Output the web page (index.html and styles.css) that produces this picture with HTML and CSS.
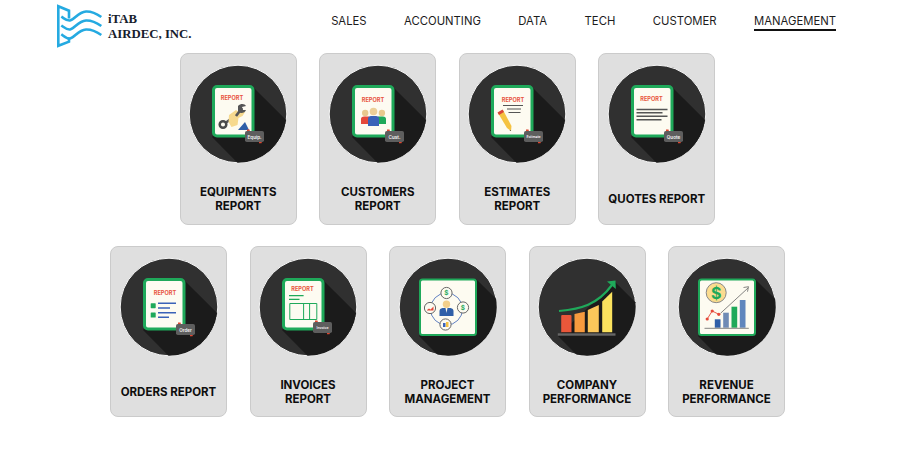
FILE: index.html
```html
<!DOCTYPE html>
<html lang="en">
<head>
<meta charset="utf-8">
<title>iTAB Airdec - Management</title>
<link rel="stylesheet" href="styles.css">
</head>
<body>
<svg class="defs" width="0" height="0" aria-hidden="true">
  <symbol id="disc" viewBox="0 0 100 100">
    <circle cx="50" cy="50" r="48.800" fill="#303030" stroke="#f7f7f7" stroke-width="1"/>
  </symbol>
  <symbol id="doc" viewBox="0 0 100 100">
    <path d="M66 24L98.100 56.100A48.800 48.800 0 0 1 49.500 98.800L24 73Z" fill="#1b1b1b"/>
    <rect x="25.500" y="22.500" width="39.500" height="49.500" rx="3.500" fill="#fdfbf1" stroke="#1fa95a" stroke-width="3"/>
  </symbol>
  <symbol id="square" viewBox="0 0 100 100">
    <path d="M78 22L98 41.800A48.800 48.800 0 0 1 39.300 97.600L21 79Z" fill="#1b1b1b"/>
    <rect x="22" y="22.500" width="56" height="55.500" rx="2.500" fill="#fdfbf1" stroke="#1fa95a" stroke-width="2"/>
  </symbol>
  <symbol id="tag" viewBox="0 0 100 100">
    <path d="M59 65.500h2.500l.5 2h-3zM71 77.500h3l-.5 1.800h-2.500z" fill="#e0452f"/>
    <rect x="57" y="67" width="19" height="11" rx="1.800" fill="#5e5e5e"/>
  </symbol>
</svg>

<header class="topbar">
  <a class="brand" href="#">
    <svg class="brand-mark" viewBox="0 0 46 44" fill="none" stroke="#25aae1" stroke-width="2.600">
      <path d="M12 14.500V6.700L1.300 2.200V41.800L12 37.700V33.500"/>
      <path d="M4.300 12.700C8 15 10 17 13 16.500C18 15.500 21 8 29 7.500C35 7.200 40 10 44.300 13"/>
      <path d="M4.300 21.500C8 24 10 26 13 25.500C18 24.500 21 17 29 16.500C35 16.200 40 19 44.300 22"/>
      <path d="M4.300 30.300C8 33 10 35 13 34.500C18 33.500 21 26 29 25.500C35 25.200 40 28 44.300 31"/>
    </svg>
    <span class="brand-name">iTAB<br>AIRDEC, INC.</span>
  </a>
  <nav class="menu">
    <a href="#">SALES</a>
    <a href="#">ACCOUNTING</a>
    <a href="#">DATA</a>
    <a href="#">TECH</a>
    <a href="#">CUSTOMER</a>
    <a class="active" href="#">MANAGEMENT</a>
  </nav>
</header>

<main class="board">
  <div class="row">
    <a class="card" href="#">
      <svg class="icon" viewBox="0 0 100 100">
        <use href="#disc"/><use href="#doc"/>
        <text class="rep" x="44" y="35.500">REPORT</text>
        <path d="M36 60L47 52" stroke="#555" stroke-width="2.500"/>
        <circle cx="35" cy="60.500" r="3.300" fill="#fdfbf1" stroke="#4a4a4a" stroke-width="2.500"/>
        <path d="M41 51l7-5 4 3 3-3 2 2-2.500 4-4 2-1 7-6 2-3-5z" fill="#f6d98e"/>
        <path d="M48 52L54 44" stroke="#555" stroke-width="2.600"/>
        <path d="M50 42c3-3 7-2 8 0l-4 1 1 3 3 0c-1 3-5 4-8 2z" fill="#555"/>
        <path d="M50 66l7-8 4 8z" fill="#2f5fa8"/>
        <use href="#tag"/>
        <text class="tagtxt" x="66.500" y="74.500">Equip.</text>
      </svg>
      <span class="label">EQUIPMENTS REPORT</span>
    </a>
    <a class="card" href="#">
      <svg class="icon" viewBox="0 0 100 100">
        <use href="#disc"/><use href="#doc"/>
        <text class="rep" x="45" y="38">REPORT</text>
        <circle cx="37.200" cy="49" r="3.200" fill="#e8c98e"/>
        <circle cx="53.900" cy="49" r="3.200" fill="#e8c98e"/>
        <path d="M33 60v-5q0-2.500 3-2.500h5v7.500z" fill="#e5483a"/>
        <path d="M58 60v-5q0-2.500-3-2.500h-5v7.500z" fill="#1fa95a"/>
        <circle cx="45.500" cy="47.500" r="3.800" fill="#eccf98"/>
        <path d="M40 62v-7q0-3 3-3h5q3 0 3 3v7z" fill="#3a62b8"/>
        <use href="#tag"/>
        <text class="tagtxt" x="66.500" y="74.500">Cust.</text>
      </svg>
      <span class="label">CUSTOMERS REPORT</span>
    </a>
    <a class="card" href="#">
      <svg class="icon" viewBox="0 0 100 100">
        <use href="#disc"/><use href="#doc"/>
        <text class="rep" x="46" y="38">REPORT</text>
        <path d="M36 41.500h20M40 45h14M41.500 48.500h12" stroke="#555" stroke-width="1.200"/>
        <path d="M31 49l5-3 8.500 16-.5 5-4-3z" fill="#f5c242"/>
        <path d="M30.500 48.500l5-3 1.500 2.500-5 3z" fill="#d9443a"/>
        <path d="M43.500 67l.5-1-1.500 0z" fill="#333"/>
        <use href="#tag"/>
        <text class="tagtxt small" x="66.500" y="74">Estimate</text>
      </svg>
      <span class="label">ESTIMATES REPORT</span>
    </a>
    <a class="card" href="#">
      <svg class="icon" viewBox="0 0 100 100">
        <use href="#disc"/><use href="#doc"/>
        <text class="rep" x="44.500" y="36.500">REPORT</text>
        <path d="M29.500 45.500h31M29.500 48.800h26M29.500 52.200h31M29.500 55.800h25" stroke="#555" stroke-width="1.500"/>
        <use href="#tag"/>
        <text class="tagtxt" x="66.500" y="74.500">Quote</text>
      </svg>
      <span class="label">QUOTES REPORT</span>
    </a>
  </div>
  <div class="row">
    <a class="card" href="#">
      <svg class="icon" viewBox="0 0 100 100">
        <use href="#disc"/><use href="#doc"/>
        <text class="rep" x="46" y="38">REPORT</text>
        <rect x="31.700" y="46.200" width="5" height="5" rx=".6" fill="#1fa95a"/>
        <rect x="31.700" y="55.500" width="5" height="5" rx=".6" fill="#1fa95a"/>
        <path d="M39 46.300h18M39 51h12M39 55.700h18M39 60.300h11" stroke="#3a62b8" stroke-width="1.400"/>
        <use href="#tag"/>
        <text class="tagtxt" x="66.500" y="74.500">Order</text>
      </svg>
      <span class="label">ORDERS REPORT</span>
    </a>
    <a class="card" href="#">
      <svg class="icon" viewBox="0 0 100 100">
        <use href="#disc"/><use href="#doc"/>
        <text class="rep" x="44.500" y="34">REPORT</text>
        <path d="M31 38.700h14.600M31 42.300h10.500" stroke="#1fa95a" stroke-width="1.200"/>
        <path d="M31.800 46.500h27v16h-27zM45.600 46.500v16M51.600 46.500v16" fill="none" stroke="#1fa95a" stroke-width="1"/>
        <use href="#tag" x="-2" y="-2"/>
        <text class="tagtxt small" x="64.500" y="72.300">Invoice</text>
      </svg>
      <span class="label">INVOICES REPORT</span>
    </a>
    <a class="card" href="#">
      <svg class="icon" viewBox="0 0 100 100">
        <use href="#disc"/><use href="#square"/>
        <circle cx="48.500" cy="52" r="16" fill="none" stroke="#3a62b8" stroke-width=".8"/>
        <g fill="#fdfbf1" stroke="#666" stroke-width="1">
          <circle cx="48.500" cy="36" r="5.600"/>
          <circle cx="65" cy="50.500" r="5.600"/>
          <circle cx="47.500" cy="67.500" r="5.600"/>
          <circle cx="32" cy="51" r="5.600"/>
        </g>
        <text class="glyph" x="48.500" y="38.300">$</text>
        <text class="glyph" x="65" y="52.800">$</text>
        <path d="M45 66h2.500v4h-2.500z" fill="#3a62b8"/><path d="M48 65h2.500v5h-2.500z" fill="#f5c242"/>
        <path d="M29 53l2-1.500 1.500 1 3-3v4h-6.500z" fill="#e5483a"/>
        <circle cx="48.500" cy="47.300" r="3.700" fill="#f3cf8a"/>
        <path d="M41.500 59v-5q0-2.500 3-3h8q3 .5 3 3v5z" fill="#2f5fa8"/>
        <path d="M47.500 51h2l-1 5z" fill="#fdfbf1"/>
      </svg>
      <span class="label">PROJECT MANAGEMENT</span>
    </a>
    <a class="card" href="#">
      <svg class="icon" viewBox="0 0 100 100">
        <use href="#disc"/>
        <path d="M78 25L98.400 45.300A48.800 48.800 0 0 1 39.300 97.600L21 79Z" fill="#1b1b1b"/>
        <path d="M24.200 59q0-1 1-1h8.300q1 0 1 1v16.300h-10.300z" fill="#e9573a"/>
        <path d="M37.500 57l10.300-2.300v20.600h-10.300z" fill="#f79a3e"/>
        <path d="M50.800 53l11-5v27.300h-11z" fill="#fbc75a"/>
        <path d="M65.200 44.500l10-9.800v40.600h-10z" fill="#fbe25e"/>
        <rect x="20.800" y="76.300" width="57.700" height="2.400" fill="#666"/>
        <path d="M22 54C44 52 60 48 75 28" fill="none" stroke="#1fa95a" stroke-width="2.200"/>
        <path d="M70 24.500l8.500-1 .3 8.500z" fill="#1fa95a"/>
      </svg>
      <span class="label">COMPANY PERFORMANCE</span>
    </a>
    <a class="card" href="#">
      <svg class="icon" viewBox="0 0 100 100">
        <use href="#disc"/><use href="#square"/>
        <circle cx="39.200" cy="35.700" r="10" fill="#fbdc8f" stroke="#888" stroke-width="1"/>
        <text class="coin" x="39.200" y="41.500">$</text>
        <path d="M43.500 56.300L71 31" stroke="#666" stroke-width=".8"/>
        <path d="M66.500 30.500l5-.8-1 5" fill="none" stroke="#666" stroke-width=".8"/>
        <path d="M30.200 62l5-8 6.600 3.300" fill="none" stroke="#e5483a" stroke-width=".9"/>
        <circle cx="30.200" cy="62" r="1.600" fill="#e5483a"/><circle cx="35.200" cy="54" r="1.600" fill="#e5483a"/><circle cx="41.800" cy="57.300" r="1.600" fill="#e5483a"/>
        <rect x="37.800" y="62.300" width="5.700" height="8.400" fill="#2f5fa8"/>
        <rect x="46.200" y="55.700" width="5.600" height="15" fill="#6f8bb5"/>
        <rect x="54.500" y="49.700" width="5.700" height="21" fill="#1fa95a"/>
        <rect x="62.800" y="43" width="5.700" height="27.700" fill="#5f86bd"/>
        <path d="M27.500 71.300h44.300" stroke="#666" stroke-width=".8"/>
      </svg>
      <span class="label">REVENUE PERFORMANCE</span>
    </a>
  </div>
</main>
</body>
</html>
```

FILE: styles.css
```css
* { box-sizing: border-box; }
html, body { margin: 0; height: 100%; }
body { background: #fff; font-family: Inter, "Liberation Sans", sans-serif; color: #111; overflow: hidden; }
a { color: inherit; text-decoration: none; }
.defs { display: block; height: 0; width: 0; overflow: hidden; }

.topbar { height: 53.300px; padding: 0 64px 0 57px; display: flex; justify-content: space-between; align-items: flex-start; }
.brand { display: flex; align-items: flex-start; padding-top: 4px; gap: 5px; }
.brand-mark { width: 46px; height: 44px; display: block; }
.brand-name { font-family: "Liberation Serif", serif; font-weight: 700; font-size: 12.800px; line-height: 15px; padding-top: 8px; color: #16202c; }

.menu { display: flex; gap: 37.500px; padding-top: 13px; font-size: 11.300px; line-height: 16px; color: #1c1c1c; }
.menu a { display: block; padding-bottom: 0; border-bottom: 2px solid transparent; }
.menu .active { border-bottom-color: #111; }

.board { display: flex; flex-direction: column; gap: 21.300px; padding-right: 5px; }
.row { display: flex; justify-content: center; gap: 22.500px; }
.card { width: 117px; height: 171.400px; background: #dfdfdf; border: 1px solid #cbcbcb; border-radius: 8px; display: flex; flex-direction: column; align-items: center; padding-top: 10px; }
.icon { width: 100px; height: 100px; flex: none; display: block; }
.label { flex: none; width: 100%; height: 28px; margin-top: 21px; display: flex; align-items: center; justify-content: center; text-align: center; padding: 0 8px; font-size: 11.500px; line-height: 14px; font-weight: 700; color: #0e0e0e; }

.rep { font: 700 5.600px Inter, sans-serif; fill: #e8553f; text-anchor: middle; }
.tagtxt { font: 600 4.600px Inter, sans-serif; fill: #f4f4f4; text-anchor: middle; }
.tagtxt.small { font-size: 3.400px; }
.glyph { font: 700 6.500px Inter, sans-serif; fill: #1fa95a; text-anchor: middle; }
.coin { font: 700 16px Inter, sans-serif; fill: #1fa95a; text-anchor: middle; }
```
